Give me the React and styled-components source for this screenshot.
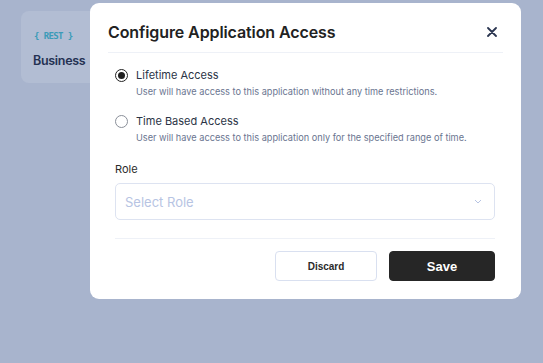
import styled, { createGlobalStyle } from 'styled-components';
import { useState } from 'react';

const GlobalStyle = createGlobalStyle`
  html, body {
    margin: 0;
    padding: 0;
  }
  body {
    background: #a8b4cd;
    font-family: 'Inter', 'Noto Sans', sans-serif;
  }
`;

const Page = styled.div`
  position: relative;
  width: 543px;
  height: 363px;
  padding: 11px 0 0 21px;
  box-sizing: border-box;
  overflow: hidden;
`;

const ApiCard = styled.div`
  width: 120px;
  height: 72px;
  box-sizing: border-box;
  padding: 19px 0 0 12px;
  background: #b2bdd3;
  border-radius: 8px;
`;

const ApiTag = styled.div`
  font-family: 'DejaVu Sans Mono', monospace;
  font-size: 9px;
  font-weight: 700;
  color: #3b9bb8;
  line-height: 12px;
  letter-spacing: -0.6px;
  padding-left: 1px;
`;

const ApiName = styled.div`
  margin-top: 11px;
  font-size: 12.5px;
  font-weight: 600;
  color: #243152;
  line-height: 16px;
  letter-spacing: -0.3px;
`;

const Modal = styled.div`
  position: absolute;
  left: 90px;
  top: 3px;
  width: 431px;
  height: 296px;
  box-sizing: border-box;
  background: #ffffff;
  border-radius: 9px;
  display: flex;
  flex-direction: column;
`;

const Header = styled.div`
  margin: 0 18px;
  height: 50px;
  padding-top: 9px;
  box-sizing: border-box;
  display: flex;
  align-items: center;
  justify-content: space-between;
  border-bottom: 1px solid #eef1f7;
`;

const Title = styled.h2`
  margin: 0;
  font-size: 16px;
  font-weight: 600;
  color: #222222;
  letter-spacing: -0.1px;
`;

const CloseButton = styled.button`
  border: none;
  background: none;
  padding: 0;
  margin-right: 5px;
  width: 12px;
  height: 12px;
  display: flex;
  align-items: center;
  justify-content: center;
  cursor: pointer;
`;

const Body = styled.div`
  padding: 15px 26px 0 25px;
  display: flex;
  flex-direction: column;
`;

const Option = styled.label`
  display: grid;
  grid-template-columns: 13px 1fr;
  column-gap: 8px;
  row-gap: 3px;
  margin-bottom: ${({ last }) => (last ? '0' : '16px')};
  cursor: pointer;
`;

const RadioCircle = styled.span`
  width: 13px;
  height: 13px;
  box-sizing: border-box;
  border-radius: 50%;
  border: 1px solid ${({ checked }) => (checked ? '#222222' : '#8a8f99')};
  display: flex;
  align-items: center;
  justify-content: center;
  align-self: center;
  &::after {
    content: '';
    width: 7px;
    height: 7px;
    border-radius: 50%;
    background: #1f1f1f;
    display: ${({ checked }) => (checked ? 'block' : 'none')};
  }
`;

const OptionTitle = styled.span`
  font-size: 11px;
  line-height: 15px;
  color: #2b3446;
`;

const OptionDesc = styled.span`
  grid-column: 2;
  font-size: 9.2px;
  line-height: 12px;
  color: #6a7590;
`;

const FieldLabel = styled.div`
  margin-top: 18px;
  font-size: 11px;
  line-height: 14px;
  color: #2b2b2b;
`;

const SelectBox = styled.div`
  margin-top: 7px;
  height: 37px;
  box-sizing: border-box;
  border: 1px solid #dde3f1;
  border-radius: 5px;
  display: flex;
  align-items: center;
  justify-content: space-between;
  padding: 0 12px 0 9px;
  font-size: 13px;
  color: #b7c4e3;
`;

const Divider = styled.div`
  margin-top: 18px;
  height: 1px;
  background: #eef1f7;
`;

const Footer = styled.div`
  margin-top: 12px;
  display: flex;
  justify-content: flex-end;
  gap: 12px;
`;

const Button = styled.button`
  height: 30px;
  width: ${({ primary }) => (primary ? '106px' : '102px')};
  box-sizing: border-box;
  border-radius: 4px;
  border: 1px solid ${({ primary }) => (primary ? '#262626' : '#d9e0f0')};
  background: ${({ primary }) => (primary ? '#262626' : '#ffffff')};
  color: ${({ primary }) => (primary ? '#ffffff' : '#2a2a2a')};
  font-family: 'Liberation Sans', Arial, sans-serif;
  font-weight: 700;
  font-size: ${({ primary }) => (primary ? '13px' : '10px')};
  cursor: pointer;
`;

const options = [
  {
    id: 'lifetime',
    title: 'Lifetime Access',
    desc: 'User will have access to this application without any time restrictions.',
  },
  {
    id: 'time',
    title: 'Time Based Access',
    desc: 'User will have access to this application only for the specified range of time.',
  },
];

function App() {
  const [access, setAccess] = useState('lifetime');
  return (
    <Page>
      <GlobalStyle />
      <ApiCard>
        <ApiTag>{'{ REST }'}</ApiTag>
        <ApiName>Business</ApiName>
      </ApiCard>
      <Modal>
        <Header>
          <Title>Configure Application Access</Title>
          <CloseButton type="button" aria-label="Close">
            <svg width="10" height="10" viewBox="0 0 10 10">
              <path d="M1 1L9 9M9 1L1 9" stroke="#2a3550" strokeWidth="1.8" strokeLinecap="round" />
            </svg>
          </CloseButton>
        </Header>
        <Body>
          {options.map((opt, i) => (
            <Option key={opt.id} last={i === options.length - 1} onClick={() => setAccess(opt.id)}>
              <RadioCircle checked={access === opt.id} />
              <OptionTitle>{opt.title}</OptionTitle>
              <OptionDesc>{opt.desc}</OptionDesc>
            </Option>
          ))}
          <FieldLabel>Role</FieldLabel>
          <SelectBox>
            <span>Select Role</span>
            <svg width="8" height="5" viewBox="0 0 8 5">
              <path d="M1 1L4 4L7 1" stroke="#b7c4e3" strokeWidth="1" fill="none" />
            </svg>
          </SelectBox>
          <Divider />
          <Footer>
            <Button type="button">Discard</Button>
            <Button type="button" primary>Save</Button>
          </Footer>
        </Body>
      </Modal>
    </Page>
  );
}

export default App;
